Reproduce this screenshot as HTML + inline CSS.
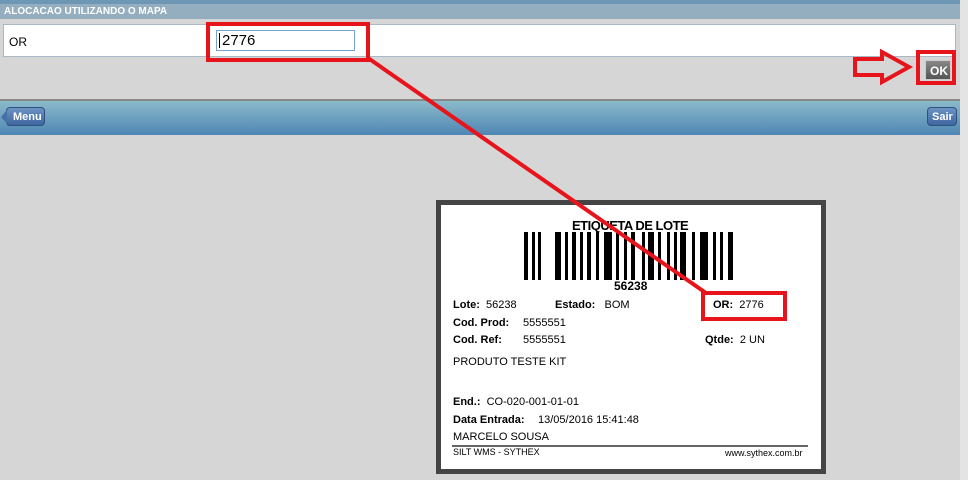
<!DOCTYPE html>
<html><head><style>
body{margin:0;width:968px;height:480px;background:#d6d6d6;position:relative;overflow:hidden;font-family:"Liberation Sans",sans-serif}
div{position:absolute;box-sizing:border-box}
.t{font-size:11px;color:#000;white-space:nowrap}
.b{font-weight:bold}
</style></head><body>
<div style="left:960px;top:0;width:8px;height:480px;background:#e4e4e4"></div>
<div style="left:0;top:0;width:960px;height:4px;background:#6d97b5"></div>
<div style="left:0;top:4px;width:960px;height:15px;background:#94aec0;color:#fff;font-size:10px;font-weight:bold;padding:2px 0 0 4px">ALOCACAO UTILIZANDO O MAPA</div>
<div style="left:3px;top:24px;width:953px;height:33px;background:#fff;border:1px solid #a8b8c8"></div>
<div class="t" style="left:9px;top:35px;font-size:12px">OR</div>
<div style="left:216px;top:30px;width:139px;height:21px;border:1px solid #7aa0d8;background:#fff;font-size:15px;padding:1px 0 0 5px">2776</div>
<div style="left:219px;top:33px;width:1px;height:15px;background:#000"></div>
<div style="left:206px;top:22px;width:164px;height:40px;border:4px solid #e8141c"></div>
<div style="left:0;top:99px;width:960px;height:2px;background:#888"></div>
<div style="left:0;top:101px;width:960px;height:34px;background:linear-gradient(#8bbacb,#4f86b3)"></div>
<div style="left:6px;top:107px;width:39px;height:19px;background:linear-gradient(#6c93c2,#3f66a0);border:1px solid #30507e;border-radius:4px;color:#fff;font-size:11px;font-weight:bold;padding:3px 0 0 6px">Menu</div>
<div style="left:1px;top:110px;width:0;height:0;border-top:7px solid transparent;border-bottom:7px solid transparent;border-right:6px solid #4a6fa6"></div>
<div style="left:927px;top:107px;width:30px;height:19px;background:linear-gradient(#6c93c2,#3f66a0);border:1px solid #30507e;border-radius:4px;color:#fff;font-size:11px;font-weight:bold;padding:3px 0 0 4px">Sair</div>
<div style="left:925px;top:60px;width:26px;height:20px;background:linear-gradient(#888,#555);border:1px solid #ccc;color:#fff;font-size:12px;font-weight:bold;padding:3px 0 0 4px">OK</div>
<div style="left:916px;top:50px;width:40px;height:35px;border:4px solid #e8141c"></div>
<svg style="position:absolute;left:0;top:0" width="968" height="480">
<polygon points="855,59 882,59 882,52 909,67 882,82 882,75 855,75" fill="none" stroke="#e8141c" stroke-width="4"/>
</svg>
<div style="left:436px;top:200px;width:390px;height:274px;background:#fff;border:5px solid #444"></div>
<div class="t b" style="left:572px;top:218px;font-size:13px;letter-spacing:-0.5px">ETIQUETA DE LOTE</div>
<svg style="position:absolute;left:524px;top:232px" width="214" height="48">
<g fill="#000">
<rect x="0" y="0" width="4" height="48"/><rect x="8" y="0" width="3" height="48"/><rect x="14" y="0" width="3" height="48"/>
<rect x="31" y="0" width="6" height="48"/><rect x="41" y="0" width="3" height="48"/><rect x="48" y="0" width="4" height="48"/>
<rect x="56" y="0" width="3" height="48"/><rect x="63" y="0" width="4" height="48"/><rect x="72" y="0" width="3" height="48"/>
<rect x="80" y="0" width="8" height="48"/><rect x="92" y="0" width="3" height="48"/><rect x="100" y="0" width="3" height="48"/>
<rect x="107" y="0" width="4" height="48"/><rect x="118" y="0" width="3" height="48"/><rect x="124" y="0" width="6" height="48"/>
<rect x="134" y="0" width="3" height="48"/><rect x="143" y="0" width="3" height="48"/><rect x="150" y="0" width="3" height="48"/>
<rect x="156" y="0" width="6" height="48"/><rect x="168" y="0" width="3" height="48"/><rect x="176" y="0" width="8" height="48"/>
<rect x="189" y="0" width="3" height="48"/><rect x="196" y="0" width="3" height="48"/><rect x="204" y="0" width="5" height="48"/>
</g></svg>
<div class="t b" style="left:614px;top:279px;font-size:12px">56238</div>
<div class="t" style="left:453px;top:299px"><b>Lote:</b>&nbsp; 56238</div>
<div class="t" style="left:555px;top:299px"><b>Estado:</b>&nbsp;&nbsp; BOM</div>
<div class="t" style="left:713px;top:299px"><b>OR:</b>&nbsp; 2776</div>
<div class="t b" style="left:453px;top:317px">Cod. Prod:</div><div class="t" style="left:523px;top:317px">5555551</div>
<div class="t b" style="left:453px;top:334px">Cod. Ref:</div><div class="t" style="left:523px;top:334px">5555551</div>
<div class="t" style="left:705px;top:334px"><b>Qtde:</b>&nbsp; 2 UN</div>
<div class="t" style="left:453px;top:356px">PRODUTO TESTE KIT</div>
<div class="t" style="left:453px;top:396px"><b>End.:</b>&nbsp; CO-020-001-01-01</div>
<div class="t b" style="left:453px;top:414px">Data Entrada:</div><div class="t" style="left:538px;top:414px">13/05/2016 15:41:48</div>
<div class="t" style="left:453px;top:431px">MARCELO SOUSA</div>
<div style="left:452px;top:445px;width:356px;height:2px;background:#666"></div>
<div class="t" style="left:453px;top:447px;font-size:9px">SILT WMS - SYTHEX</div>
<div class="t" style="left:725px;top:448px;font-size:9px">www.sythex.com.br</div>
<div style="left:701px;top:291px;width:86px;height:30px;border:4px solid #e8141c"></div>
<svg style="position:absolute;left:0;top:0" width="968" height="480">
<line x1="368" y1="58" x2="706" y2="293" stroke="#e8141c" stroke-width="4"/>
</svg>
</body></html>
